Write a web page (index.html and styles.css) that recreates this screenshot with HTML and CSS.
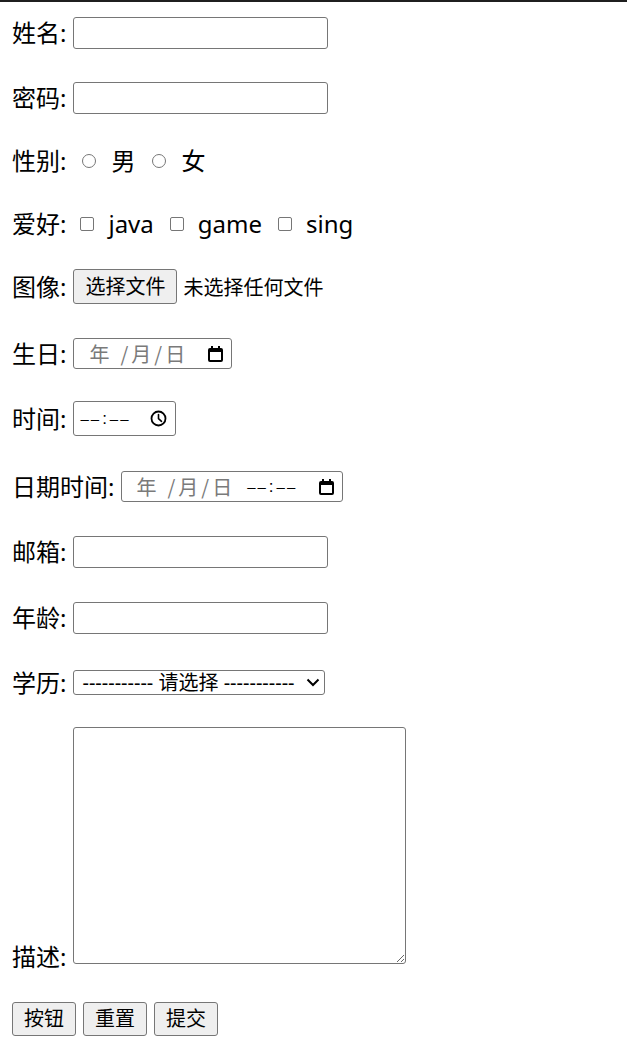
FILE: index.html
```html
<!DOCTYPE html>
<html lang="zh-CN">
<head>
<meta charset="utf-8">
<title>表单</title>
<link rel="stylesheet" href="styles.css">
</head>
<body>
<div class="topline"></div>
<form class="form">
  <div class="row">
    <span class="lbl">姓名:</span>
    <input class="field" type="text">
  </div>
  <div class="row">
    <span class="lbl">密码:</span>
    <input class="field" type="password">
  </div>
  <div class="row">
    <span class="lbl">性别:</span>
    <input class="radio" type="radio" name="sex"><span class="opt">男</span>
    <input class="radio" type="radio" name="sex"><span class="opt">女</span>
  </div>
  <div class="row">
    <span class="lbl">爱好:</span>
    <input class="check" type="checkbox"><span class="opt">java</span>
    <input class="check" type="checkbox"><span class="opt">game</span>
    <input class="check" type="checkbox"><span class="opt">sing</span>
  </div>
  <div class="row">
    <span class="lbl">图像:</span>
    <button type="button" class="btn file-btn">选择文件</button>
    <span class="file-name">未选择任何文件</span>
  </div>
  <div class="row">
    <span class="lbl">生日:</span>
    <div class="picker date">
      <span class="seg">年</span><span class="sep first">/</span><span class="seg">月</span><span class="sep">/</span><span class="seg">日</span>
      <svg class="cal" width="15" height="16" viewBox="0 0 15 16"><rect x="3" y="0" width="2" height="3"/><rect x="10" y="0" width="2" height="3"/><rect x="1" y="3" width="13" height="12" rx="1" fill="none" stroke="#000" stroke-width="2"/><rect x="1" y="3" width="13" height="3"/></svg>
    </div>
  </div>
  <div class="row">
    <span class="lbl">时间:</span>
    <div class="picker time">
      <span class="dash">––</span><span class="colon">:</span><span class="dash">––</span>
      <svg class="clock" width="17" height="17" viewBox="0 0 17 17"><circle cx="8.5" cy="8.5" r="7" fill="none" stroke="#000" stroke-width="1.8"/><path d="M8.5 4.5v4.2l3 2.6" fill="none" stroke="#000" stroke-width="1.6" stroke-linecap="round" stroke-linejoin="round"/></svg>
    </div>
  </div>
  <div class="row">
    <span class="lbl">日期时间:</span>
    <div class="picker datetime">
      <span class="seg">年</span><span class="sep first">/</span><span class="seg">月</span><span class="sep">/</span><span class="seg">日</span>
      <span class="timepart"><span class="dash">––</span><span class="colon">:</span><span class="dash">––</span></span>
      <svg class="cal" width="15" height="16" viewBox="0 0 15 16"><rect x="3" y="0" width="2" height="3"/><rect x="10" y="0" width="2" height="3"/><rect x="1" y="3" width="13" height="12" rx="1" fill="none" stroke="#000" stroke-width="2"/><rect x="1" y="3" width="13" height="3"/></svg>
    </div>
  </div>
  <div class="row">
    <span class="lbl">邮箱:</span>
    <input class="field" type="text">
  </div>
  <div class="row">
    <span class="lbl">年龄:</span>
    <input class="field" type="text">
  </div>
  <div class="row">
    <span class="lbl">学历:</span>
    <span class="select-wrap">
      <select class="select">
        <option>----------- 请选择 -----------</option>
      </select>
      <svg class="chev" width="14" height="9" viewBox="0 0 14 9"><path d="M1.5 1.5l5.5 5.5 5.5-5.5" fill="none" stroke="#000" stroke-width="2"/></svg>
    </span>
  </div>
  <div class="row row-area">
    <span class="lbl">描述:</span>
    <textarea class="area"></textarea>
  </div>
  <div class="row row-btns">
    <button type="button" class="btn small">按钮</button>
    <button type="reset" class="btn small">重置</button>
    <button type="submit" class="btn small">提交</button>
  </div>
</form>
</body>
</html>
```
FILE: styles.css
```css
html, body {
  margin: 0;
  padding: 0;
  background: #fff;
}

body {
  font-family: "Noto Sans", "Noto Sans CJK SC", sans-serif;
  color: #000;
}

.topline {
  height: 2px;
  background: #1f1f1f;
}

.form {
  display: grid;
  grid-template-rows: 62px 68px 58px 68px 57px 77px 53px 83px 48px 84px 45px 264px 71px;
  padding-left: 12px;
  margin: 0;
}

.row {
  display: flex;
  align-items: center;
  font-size: 24px;
}

.lbl {
  font-size: 24px;
  line-height: 32px;
  margin-right: 7px;
  white-space: nowrap;
}

.field {
  box-sizing: border-box;
  width: 255px;
  height: 32px;
  margin: 0;
  border: 1px solid #767676;
  border-radius: 3px;
  background: #fff;
  font: 20px "Noto Sans", "Noto Sans CJK SC", sans-serif;
  padding: 0 3px;
}

.radio,
.check {
  appearance: none;
  -webkit-appearance: none;
  box-sizing: border-box;
  width: 14px;
  height: 14px;
  min-width: 14px;
  padding: 0;
  margin: 0 0 0 17px;
  border: 1px solid #767676;
  background: #fff;
  flex: none;
}

.radio {
  border-radius: 50%;
}

.check {
  border-radius: 2px;
  margin-left: 16px;
}

.lbl + .radio {
  margin-left: 9px;
}

.lbl + .check {
  margin-left: 7px;
}

.opt {
  font-size: 24px;
  line-height: 32px;
  margin-left: 15px;
}

.check + .opt {
  margin-left: 14px;
}

.btn {
  box-sizing: border-box;
  margin: 0;
  padding: 0;
  background: #efefef;
  border: 1px solid #767676;
  border-radius: 3px;
  color: #000;
  font: 20px "Noto Sans", "Noto Sans CJK SC", sans-serif;
  line-height: 1;
}

.file-btn {
  width: 104px;
  height: 35px;
}

.file-name {
  font-size: 20px;
  margin-left: 6px;
}

.picker {
  box-sizing: border-box;
  display: flex;
  align-items: center;
  border: 1px solid #767676;
  border-radius: 3px;
  background: #fff;
  font-family: "Noto Sans CJK SC", sans-serif;
  font-size: 20px;
}

.date {
  width: 159px;
  height: 31px;
  padding-left: 15px;
}

.time {
  width: 103px;
  height: 35px;
  padding-left: 6px;
}

.datetime {
  width: 222px;
  height: 31px;
  padding-left: 14px;
}

.seg,
.sep {
  color: #7a7a7a;
  line-height: 1;
}

.sep {
  margin: 0 3px;
}

.sep.first {
  margin-left: 11px;
}

.dash {
  font-family: "Liberation Sans", sans-serif;
  font-size: 15px;
  letter-spacing: 2px;
  line-height: 1;
  color: #000;
}

.colon {
  font-family: "Liberation Sans", sans-serif;
  font-size: 17px;
  line-height: 1;
  margin: 0 3px 0 1px;
}

.timepart {
  display: flex;
  align-items: center;
  margin-left: 15px;
}

.cal {
  margin-left: auto;
  margin-right: 8px;
  flex: none;
}

.clock {
  margin-left: auto;
  margin-right: 8px;
  flex: none;
}

.select-wrap {
  position: relative;
  display: inline-flex;
}

.select {
  appearance: none;
  -webkit-appearance: none;
  box-sizing: border-box;
  width: 252px;
  height: 25px;
  margin: 0;
  padding: 0 0 0 8px;
  border: 1px solid #767676;
  border-radius: 3px;
  background: #fff;
  color: #000;
  font: 20px "Noto Sans", "Noto Sans CJK SC", sans-serif;
  line-height: 23px;
}

.chev {
  position: absolute;
  right: 5px;
  top: 8px;
}

.row-area {
  align-items: flex-end;
}

.row-area .lbl {
  line-height: 24px;
}

.area {
  box-sizing: border-box;
  width: 333px;
  height: 237px;
  margin: 0 0 5px 0;
  border: 1px solid #767676;
  border-radius: 3px;
  background: #fff;
}

.row-btns {
  align-items: flex-start;
  padding-top: 33px;
  gap: 7px;
}

.small {
  width: 64px;
  height: 34px;
}
```
